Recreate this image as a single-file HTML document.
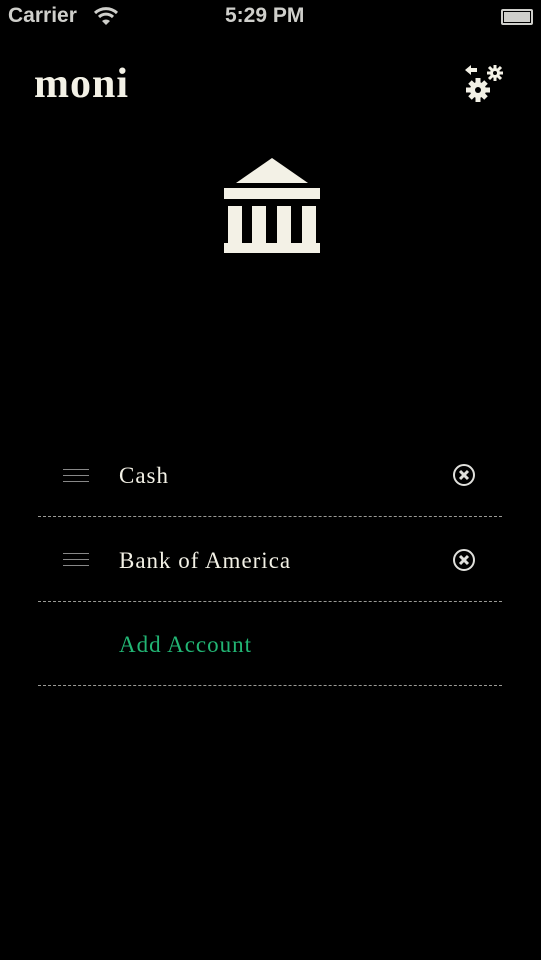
<!DOCTYPE html>
<html><head><style>
body{margin:0;width:541px;height:960px;background:#000;position:relative;overflow:hidden;font-family:"Liberation Sans",sans-serif}
.a{position:absolute}
.sb{color:#cfcfcb;font-size:21px;top:4px;font-weight:bold}
.t{position:absolute;left:119px;font-family:"Liberation Serif",serif;font-size:23px;color:#f3f1e6;letter-spacing:1px}
.sep{position:absolute;left:38px;width:464px;border-top:1px dashed #9a9a96}
.h{position:absolute;left:63px;width:26px;height:1px;background:#888;box-shadow:0 6px 0 #888,0 12px 0 #888}
</style></head><body>
<div class="a sb" style="left:8px">Carrier</div>
<svg class="a" style="left:93px;top:6px" width="26" height="20" viewBox="0 0 26 20"><path d="M2 7a16 16 0 0 1 22 0" stroke="#cfcfcb" stroke-width="3" fill="none"/><path d="M6 11a10 10 0 0 1 14 0" stroke="#cfcfcb" stroke-width="3" fill="none"/><path d="M13 19l-4-4a6 6 0 0 1 8 0z" fill="#cfcfcb"/></svg>
<div class="a sb" style="left:225px">5:29 PM</div>
<div class="a" style="left:501px;top:9px;width:28px;height:12px;border:2px solid #cfcfcb;border-radius:2px"><div style="margin:1px;height:10px;background:#cfcfcb"></div></div>
<div class="a" style="left:531px;top:14px;width:2px;height:6px;background:#cfcfcb"></div>
<div class="a" style="left:34px;top:60px;font-family:'Liberation Serif',serif;font-weight:bold;font-size:42px;color:#f3f1e6;letter-spacing:1px">moni</div>
<svg class="a" style="left:462px;top:62px" width="42" height="44" viewBox="0 0 42 44">
<path d="M3 8l6-5v3h6v4H9v3z" fill="#f3f1e6"/>
<g fill="#f3f1e6"><circle cx="16" cy="28" r="8"/><g stroke="#f3f1e6" stroke-width="5"><line x1="16" y1="16" x2="16" y2="40"/><line x1="4" y1="28" x2="28" y2="28"/><line x1="8" y1="20" x2="24" y2="36"/><line x1="24" y1="20" x2="8" y2="36"/></g></g><circle cx="16" cy="28" r="3" fill="#000"/>
<g fill="#f3f1e6"><circle cx="33" cy="11" r="5"/><g stroke="#f3f1e6" stroke-width="3"><line x1="33" y1="3" x2="33" y2="19"/><line x1="25" y1="11" x2="41" y2="11"/><line x1="27" y1="5" x2="39" y2="17"/><line x1="39" y1="5" x2="27" y2="17"/></g></g><circle cx="33" cy="11" r="2" fill="#000"/>
</svg>
<svg class="a" style="left:0;top:0" width="541" height="300"><g fill="#f3f1e6">
<path d="M272 158L308 183H236z"/><rect x="224" y="188" width="96" height="11"/>
<rect x="228" y="206" width="14" height="37"/><rect x="252" y="206" width="14" height="37"/><rect x="277" y="206" width="14" height="37"/><rect x="302" y="206" width="14" height="37"/>
<rect x="224" y="243" width="96" height="10"/></g></svg>
<div class="h" style="top:469px"></div>
<div class="t" style="top:463px">Cash</div>
<svg class="a" style="left:452px;top:463px" width="24" height="24"><circle cx="12" cy="12" r="10" stroke="#e0e0dc" stroke-width="2" fill="none"/><path d="M8 8l8 8M16 8l-8 8" stroke="#e0e0dc" stroke-width="3"/></svg>
<div class="sep" style="top:516px"></div>
<div class="h" style="top:553px"></div>
<div class="t" style="top:548px">Bank of America</div>
<svg class="a" style="left:452px;top:548px" width="24" height="24"><circle cx="12" cy="12" r="10" stroke="#e0e0dc" stroke-width="2" fill="none"/><path d="M8 8l8 8M16 8l-8 8" stroke="#e0e0dc" stroke-width="3"/></svg>
<div class="sep" style="top:601px"></div>
<div class="t" style="top:632px;color:#22b574">Add Account</div>
<div class="sep" style="top:685px"></div>
</body></html>
